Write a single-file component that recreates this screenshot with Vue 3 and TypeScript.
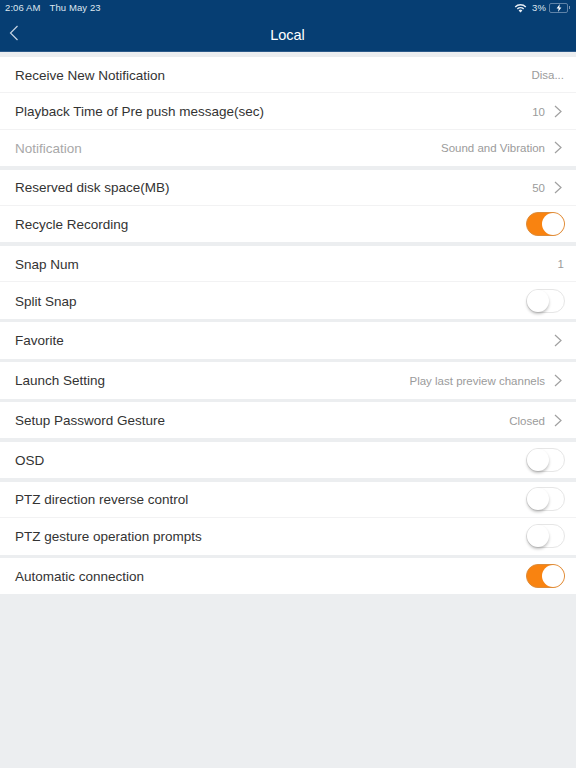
<script setup lang="ts">
type Row = { label: string; value?: string; chevron?: boolean; toggle?: boolean; on?: boolean; muted?: boolean };
const groups: Row[][] = [
  [
    { label: 'Receive New Notification', value: 'Disa...' },
    { label: 'Playback Time of Pre push message(sec)', value: '10', chevron: true },
    { label: 'Notification', value: 'Sound and Vibration', chevron: true, muted: true },
  ],
  [
    { label: 'Reserved disk space(MB)', value: '50', chevron: true },
    { label: 'Recycle Recording', toggle: true, on: true },
  ],
  [
    { label: 'Snap Num', value: '1' },
    { label: 'Split Snap', toggle: true },
  ],
  [{ label: 'Favorite', chevron: true }],
  [{ label: 'Launch Setting', value: 'Play last preview channels', chevron: true }],
  [{ label: 'Setup Password Gesture', value: 'Closed', chevron: true }],
  [{ label: 'OSD', toggle: true }],
  [
    { label: 'PTZ direction reverse control', toggle: true },
    { label: 'PTZ gesture operation prompts', toggle: true },
  ],
  [{ label: 'Automatic connection', toggle: true, on: true }],
];
</script>

<template>
  <div class="page">
    <header class="header">
      <div class="status">
        <span>2:06 AM</span>
        <span class="date">Thu May 23</span>
        <span class="spacer"></span>
        <svg class="wifi" width="13" height="10" viewBox="0 0 13 10">
          <path d="M6.5 9.6 L4.6 7.5 A2.8 2.8 0 0 1 8.4 7.5 Z" fill="#e8eef5" />
          <path d="M3.3 6.1 A4.6 4.6 0 0 1 9.7 6.1" fill="none" stroke="#e8eef5" stroke-width="1.4" />
          <path d="M1.2 3.9 A7.6 7.6 0 0 1 11.8 3.9" fill="none" stroke="#e8eef5" stroke-width="1.4" />
        </svg>
        <span class="pct">3%</span>
        <span class="battery">
          <svg width="10" height="8" viewBox="0 0 10 8">
            <path d="M5.8 0 L2.6 4.5 H4.7 L4 8 L7.4 3.4 H5.3 Z" fill="#ffffff" />
          </svg>
        </span>
        <span class="nub"></span>
      </div>
      <div class="nav">
        <svg class="back" width="10" height="16" viewBox="0 0 10 16">
          <path d="M8.5 1 L1.5 8 L8.5 15" fill="none" stroke="#c5d3e2" stroke-width="1.2" />
        </svg>
        <span class="title">Local</span>
      </div>
    </header>
    <main class="list">
      <section v-for="(group, g) in groups" :key="g" class="group">
        <div v-for="row in group" :key="row.label" class="row">
          <span class="label" :class="{ muted: row.muted }">{{ row.label }}</span>
          <span v-if="row.value" class="value" :class="{ end: !row.chevron }">{{ row.value }}</span>
          <svg v-if="row.chevron" class="chev" width="8" height="13" viewBox="0 0 8 13">
            <path d="M1 1 L7 6.5 L1 12" fill="none" stroke="#a0a0a0" stroke-width="1.2" />
          </svg>
          <span v-if="row.toggle" class="toggle" :class="{ on: row.on }"><span class="knob"></span></span>
        </div>
      </section>
    </main>
  </div>
</template>

<style>
html, body { margin: 0; background: #eceef0; }
</style>

<style scoped>
.page {
  width: 576px;
  height: 768px;
  background: #eceef0;
  font-family: "Liberation Sans", Arial, sans-serif;
  overflow: hidden;
}
.header {
  height: 52px;
  background: #063e73;
  box-sizing: border-box;
  border-bottom: 1px solid #2c5a8a;
  color: #fff;
}
.status {
  height: 15px;
  display: flex;
  align-items: center;
  padding: 0 6px 0 5px;
  font-size: 9.5px;
  color: #dfe7f0;
  letter-spacing: 0.1px;
}
.date { margin-left: 9px; }
.spacer { flex: 1; }
.wifi { margin-right: 5px; }
.pct { margin-right: 3px; }
.battery {
  width: 17px;
  height: 8px;
  border: 1px solid #5f83a8;
  border-radius: 2px;
  display: flex;
  align-items: center;
  justify-content: center;
}
.nub { width: 1px; height: 3px; background: #7d9ab8; margin-left: 1px; }
.nav {
  position: relative;
  height: 36px;
  display: flex;
  align-items: center;
  justify-content: center;
}
.back { position: absolute; left: 9px; top: 10px; }
.title { font-size: 14.5px; margin-top: 4px; margin-left: -1px; }
.list {
  padding-top: 5px;
  display: flex;
  flex-direction: column;
  gap: 3.5px;
}
.group {
  background: #fff;
}
.row {
  height: 36.4px;
  box-sizing: border-box;
  display: flex;
  align-items: center;
  padding: 0 14px 0 15px;
  border-bottom: 1px solid #f2f2f3;
}
.row:last-child { border-bottom: none; }
.label {
  flex: 1;
  font-size: 13.5px;
  color: #333;
  padding-top: 1px;
}
.label.muted { color: #a8a8a8; }
.value {
  font-size: 11.5px;
  color: #9b9b9b;
  padding-top: 1px;
}
.value.end { margin-right: -2px; }
.chev { margin-left: 9px; }
.toggle {
  width: 39px;
  height: 24px;
  box-sizing: border-box;
  border: 1px solid #e6e6e6;
  border-radius: 12px;
  background: #fff;
  position: relative;
  margin-right: -3px;
}
.toggle.on { background: #f98310; border-color: #dd8c3a; }
.knob {
  position: absolute;
  left: 0;
  top: 0;
  width: 22px;
  height: 22px;
  border-radius: 50%;
  background: #fff;
  box-shadow: 0 2px 3px rgba(0, 0, 0, 0.25);
}
.toggle.on .knob { left: 15px; box-shadow: none; }
</style>
